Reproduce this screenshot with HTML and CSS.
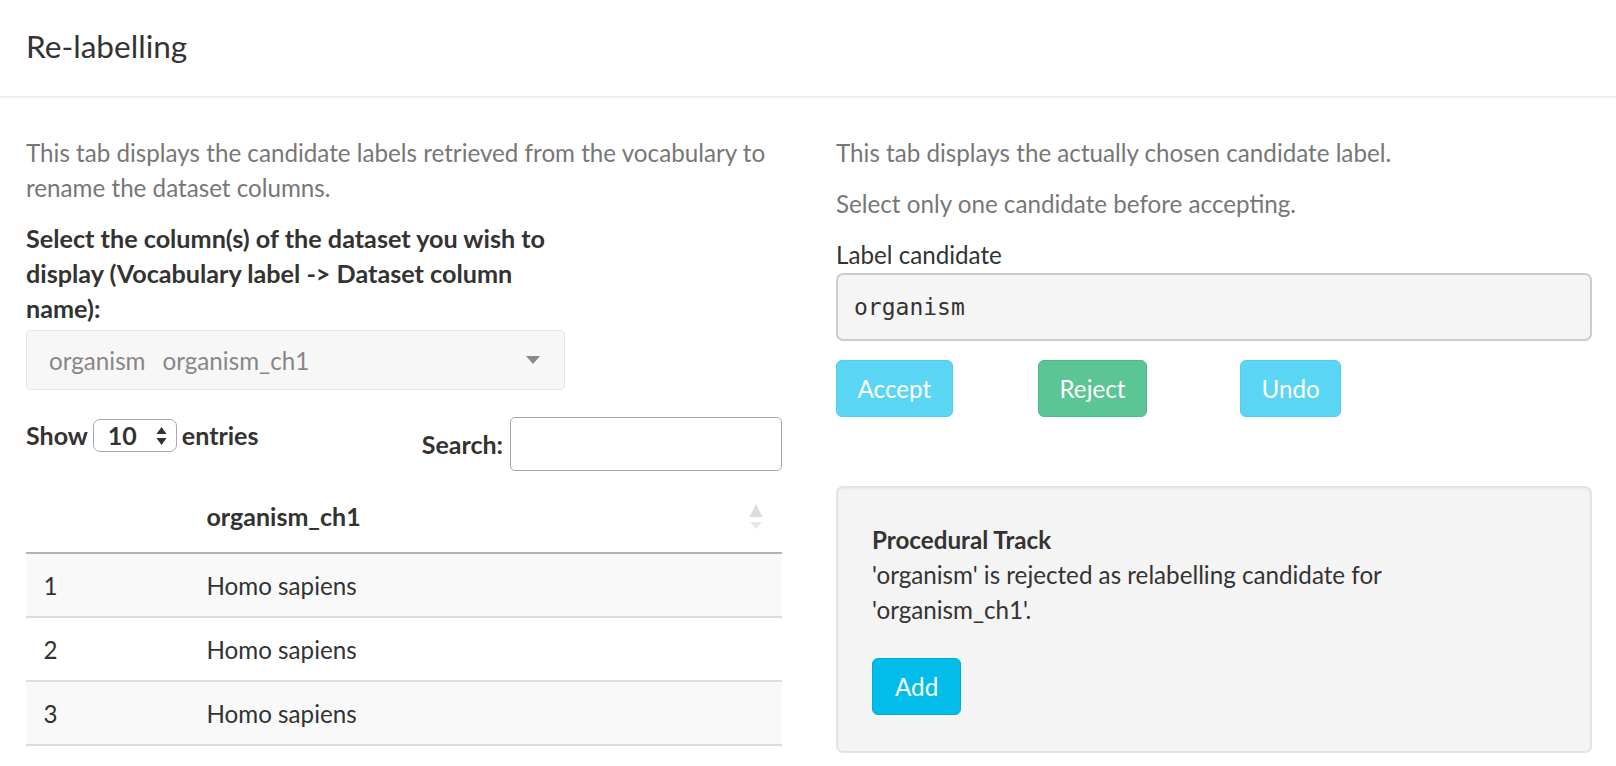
FILE: index.html
```html
<!DOCTYPE html>
<html lang="en">
<head>
<meta charset="utf-8">
<title>Re-labelling</title>
<link rel="stylesheet" href="styles.css">
</head>
<body>
<header class="page-header">
  <h2 class="title">Re-labelling</h2>
</header>
<main class="layout">
  <section class="col">
    <p class="help">This tab displays the candidate labels retrieved from the vocabulary to rename the dataset columns.</p>
    <div class="form-group">
      <label class="field-label">Select the column(s) of the dataset you wish to display (Vocabulary label -&gt; Dataset column name):</label>
      <div class="selectize">
        <div class="items"><span>organism</span><span>organism_ch1</span></div>
        <svg class="caret" width="14" height="8" viewBox="0 0 14 8"><path d="M0 0H14L7 8Z" fill="#8a8a8a"/></svg>
      </div>
    </div>
    <div class="dt-controls">
      <div class="dt-length">
        <span>Show</span>
        <div class="len-select"><span>10</span>
          <svg width="11" height="20" viewBox="0 0 11 20"><path d="M5.5 1L10.5 8H0.5Z M0.5 12H10.5L5.5 19Z" fill="#333"/></svg>
        </div>
        <span>entries</span>
      </div>
      <div class="dt-filter">
        <span>Search:</span>
        <div class="search-input"></div>
      </div>
    </div>
    <table class="dt">
      <colgroup><col class="c-idx"><col></colgroup>
      <thead>
        <tr><th></th><th><div class="th-inner"><span>organism_ch1</span>
          <svg width="14" height="26" viewBox="0 0 14 26"><path d="M7 0L13.5 13H0.5Z" fill="#dcdcdc"/><path d="M1 18H13L7 25Z" fill="#e6e6e6"/></svg></div></th></tr>
      </thead>
      <tbody>
        <tr class="odd"><td>1</td><td>Homo sapiens</td></tr>
        <tr><td>2</td><td>Homo sapiens</td></tr>
        <tr class="odd"><td>3</td><td>Homo sapiens</td></tr>
      </tbody>
    </table>
  </section>
  <section class="col">
    <p class="help">This tab displays the actually chosen candidate label.</p>
    <p class="help">Select only one candidate before accepting.</p>
    <label class="plain-label">Label candidate</label>
    <pre class="output">organism</pre>
    <div class="actions">
      <button class="btn btn-info">Accept</button>
      <button class="btn btn-success">Reject</button>
      <button class="btn btn-info">Undo</button>
    </div>
    <div class="well">
      <div class="track-title">Procedural Track</div>
      <div class="track-text">'organism' is rejected as relabelling candidate for 'organism_ch1'.</div>
      <button class="btn btn-primary">Add</button>
    </div>
  </section>
</main>
</body>
</html>
```
FILE: styles.css
```css
html, body {
  margin: 0;
  padding: 0;
}
body {
  font-family: Lato, "Liberation Sans", sans-serif;
  font-size: 24.2px;
  line-height: 35px;
  color: #333;
  background: #fff;
}
.page-header {
  box-sizing: border-box;
  height: 98px;
  padding: 28px 26px 0;
  border-bottom: 2px solid #eeeeee;
}
.title {
  margin: 0;
  font-size: 31.6px;
  font-weight: 400;
  line-height: 36px;
}
.layout {
  display: grid;
  grid-template-columns: 1fr 1fr;
  column-gap: 54px;
  padding: 37px 24px 0 26px;
}
.col {
  min-width: 0;
}
.help {
  margin: 0 0 16px;
  color: #777;
}
.form-group {
  width: 539px;
}
.field-label {
  display: block;
  font-weight: 700;
  font-size: 25.2px;
  margin-bottom: 4px;
}
.selectize {
  box-sizing: border-box;
  height: 60px;
  border: 1.5px solid #e4e4e4;
  border-radius: 5px;
  background: #f7f7f7;
  display: flex;
  align-items: center;
  justify-content: space-between;
  padding: 0 24px 0 22px;
  color: #878787;
}
.items {
  display: flex;
  gap: 17px;
}
.dt-controls {
  margin-top: 27px;
  display: flex;
  justify-content: space-between;
  align-items: flex-start;
}
.dt-length {
  display: flex;
  align-items: center;
  gap: 5px;
  font-weight: 700;
  font-size: 25px;
  margin-top: 1px;
}
.len-select {
  box-sizing: border-box;
  width: 84px;
  height: 33px;
  border: 1.5px solid #a8a8a8;
  border-radius: 7px;
  display: flex;
  align-items: center;
  justify-content: space-between;
  padding: 0 9px 0 14px;
}
.dt-filter {
  display: flex;
  align-items: center;
  gap: 7px;
  font-weight: 700;
  font-size: 25px;
}
.search-input {
  box-sizing: border-box;
  width: 272px;
  height: 54px;
  border: 1.5px solid #a8a8a8;
  border-radius: 5px;
  background: #fff;
}
.dt {
  width: 100%;
  margin-top: 11px;
  border-collapse: collapse;
  table-layout: fixed;
}
.c-idx {
  width: 163px;
}
.dt th {
  text-align: left;
  font-weight: 700;
  font-size: 25px;
  padding: 17px 17.5px 18px;
  border-bottom: 2px solid #b4b4b4;
}
.th-inner {
  display: flex;
  justify-content: space-between;
  align-items: center;
  padding-right: 2px;
}
.dt td {
  padding: 13.5px 17.5px;
  border-bottom: 2px solid #dddddd;
}
.dt tr.odd td {
  background: #f9f9f9;
}
.plain-label {
  display: block;
  margin-top: 15px;
  margin-bottom: 1px;
}
.output {
  margin: 0;
  padding: 15px 16px;
  border: 2px solid #cccccc;
  border-radius: 7px;
  background: #f5f5f5;
  font-family: "DejaVu Sans Mono", "Liberation Mono", monospace;
  font-size: 23px;
  line-height: 34px;
  color: #333;
}
.actions {
  margin-top: 19px;
  display: grid;
  grid-template-columns: repeat(4, 1fr);
  column-gap: 52px;
}
.btn {
  justify-self: start;
  font-family: inherit;
  font-size: 24.2px;
  line-height: 35px;
  color: #fff;
  padding: 10px 20.5px;
  border: 1.5px solid transparent;
  border-radius: 6px;
  cursor: pointer;
}
.btn-info {
  background: #5bd5f4;
  border-color: #52cdeb;
}
.btn-success {
  background: #5bc595;
  border-color: #50b989;
}
.btn-primary {
  background: #02bde9;
  border-color: #02aad3;
  padding: 10px 22px;
}
.well {
  margin-top: 69px;
  background: #f4f4f4;
  border: 2px solid #e3e3e3;
  border-radius: 7px;
  box-shadow: inset 0 1px 2px rgba(0, 0, 0, 0.05);
  padding: 33.5px 34px 36px;
}
.track-title {
  font-weight: 700;
}
.track-text {
  max-width: 560px;
}
.well .btn {
  margin-top: 31px;
}
```
